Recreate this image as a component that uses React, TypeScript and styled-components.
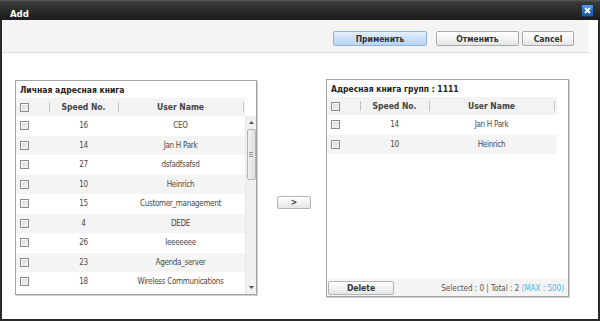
import React from "react";
import styled, { createGlobalStyle } from "styled-components";

const GlobalStyle = createGlobalStyle`
  html, body {
    margin: 0;
    padding: 0;
    background: #ffffff;
  }
  body {
    font-family: "DejaVu Sans Condensed", Tahoma, "DejaVu Sans", sans-serif;
    font-size: 8px;
    color: #4a4a4a;
  }
`;

const Window = styled.div`
  width: 600px;
  height: 321px;
  box-sizing: border-box;
  display: flex;
  flex-direction: column;
  background: #2a2a2a;
  padding: 0 2px 2px 2px;
`;

const TitleBar = styled.div`
  height: 20px;
  margin: 0 -2px;
  display: flex;
  align-items: center;
  justify-content: space-between;
  padding: 0 6px 0 10px;
  background: linear-gradient(#5a5a5a 0px, #3a3a3a 2px, #2c2c2c 10px, #1c1c1c 100%);
`;

const Title = styled.span`
  color: #fff;
  font-weight: bold;
  font-size: 9.5px;
  margin-top: 6px;
`;

const CloseButton = styled.button`
  width: 13px;
  height: 13px;
  padding: 0;
  border: 1px solid #12335f;
  border-radius: 1px;
  background: linear-gradient(#5c9be0, #2a69b8 55%, #1e58a2);
  display: flex;
  align-items: center;
  justify-content: center;
  margin-top: 1px;
`;

const Body = styled.div`
  flex: 1;
  background: #fff;
  display: flex;
  flex-direction: column;
`;

const Toolbar = styled.div`
  height: 33px;
  box-sizing: border-box;
  margin-right: 9px;
  background: #f4f4f4;
  border-bottom: 1px solid #dcdcdc;
  display: flex;
  justify-content: flex-end;
  align-items: flex-start;
  padding: 11px 15px 0 0;
  gap: 3px;
`;

const ActionButton = styled.button<{ $primary?: boolean; $w: number; $gap?: number }>`
  width: ${({ $w }) => $w}px;
  height: 15px;
  padding: 0;
  margin-right: ${({ $gap }) => $gap ?? 0}px;
  font-family: inherit;
  font-size: 8.5px;
  font-weight: bold;
  color: #333;
  border-radius: 2px;
  border: 1px solid ${({ $primary }) => ($primary ? "#8db4e0" : "#aaaaaa")};
  background: ${({ $primary }) =>
    $primary
      ? "linear-gradient(#e4f0fd, #c9e0f8 50%, #b9d6f5)"
      : "linear-gradient(#ffffff, #f4f4f4 50%, #e4e4e4)"};
`;

const Content = styled.div`
  flex: 1;
  display: flex;
  align-items: flex-start;
  padding: 26px 0 0 13px;
`;

const Panel = styled.div<{ $w: number; $h: number; $top: number }>`
  width: ${({ $w }) => $w}px;
  height: ${({ $h }) => $h}px;
  margin-top: ${({ $top }) => $top}px;
  box-sizing: border-box;
  border: 1px solid #a4a4a4;
  box-shadow: 1px 1px 0 #cfcfcf;
  display: flex;
  flex-direction: column;
  overflow: hidden;
  background: #fff;
`;

const PanelTitle = styled.div<{ $h: number }>`
  height: ${({ $h }) => $h}px;
  line-height: ${({ $h }) => $h + 1}px;
  padding-left: 4px;
  font-size: 8.5px;
  font-weight: bold;
  color: #222;
  white-space: nowrap;
`;

const PanelBody = styled.div`
  flex: 1;
  display: flex;
  min-height: 0;
`;

const Table = styled.div<{ $w: number }>`
  width: ${({ $w }) => $w}px;
  display: flex;
  flex-direction: column;
`;

const HeaderRow = styled.div`
  height: 18px;
  display: grid;
  grid-template-columns: 33px 69px 125px 1fr;
  align-items: center;
  background: #f3f3f3;
  font-size: 8.5px;
  font-weight: bold;
  color: #444;
`;

const HeaderCell = styled.div<{ $sep?: boolean }>`
  position: relative;
  text-align: center;
  height: 100%;
  line-height: 18px;
  &::before {
    content: "";
    display: ${({ $sep }) => ($sep ? "block" : "none")};
    position: absolute;
    left: 0;
    top: 4px;
    height: 10px;
    border-left: 1px solid #c4c4c4;
  }
`;

const Row = styled.div<{ $alt: boolean }>`
  height: 19.5px;
  display: grid;
  grid-template-columns: 33px 69px 125px 1fr;
  align-items: center;
  background: ${({ $alt }) => ($alt ? "#f4f4f4" : "#fff")};
  flex-shrink: 0;
`;

const Cell = styled.div`
  text-align: center;
  white-space: nowrap;
  letter-spacing: -0.3px;
`;

const CheckCell = styled.div`
  display: flex;
  align-items: center;
  padding-left: 4px;
`;

const CheckBox = styled.span`
  width: 9px;
  height: 9px;
  box-sizing: border-box;
  border: 1px solid #8c8c8c;
  background: linear-gradient(135deg, #d8d8d8, #f4f4f4);
  box-shadow: inset 1px 1px 0 #fff;
`;

const ScrollColumn = styled.div`
  width: 11px;
  display: flex;
  flex-direction: column;
`;

const ScrollSpacer = styled.div`
  height: 18px;
  flex-shrink: 0;
`;

const ScrollTrack = styled.div`
  flex: 1;
  background: #f0f0f0;
  display: flex;
  flex-direction: column;
  align-items: center;
  border-left: 1px solid #e8e8e8;
`;

const ScrollArrow = styled.div`
  height: 13px;
  width: 100%;
  display: flex;
  align-items: center;
  justify-content: center;
  flex-shrink: 0;
`;

const ScrollThumb = styled.div`
  width: 9px;
  height: 51px;
  box-sizing: border-box;
  border: 1px solid #b4b4b4;
  border-radius: 2px;
  background: linear-gradient(90deg, #f2f2f2, #dedede);
  display: flex;
  align-items: center;
  justify-content: center;
`;

const ScrollRest = styled.div`
  flex: 1;
`;

const Middle = styled.div`
  width: 69px;
  align-self: stretch;
  display: flex;
  align-items: center;
  padding: 6px 0 0 20px;
  box-sizing: border-box;
`;

const MoveButton = styled.button`
  width: 34px;
  height: 13px;
  padding: 0;
  font-family: inherit;
  font-size: 8.5px;
  font-weight: bold;
  color: #333;
  border: 1px solid #b4b4b4;
  border-radius: 2px;
  background: linear-gradient(#ffffff, #f2f2f2 50%, #e6e6e6);
  line-height: 11px;
`;

const Empty = styled.div`
  flex: 1;
`;

const Footer = styled.div`
  height: 17px;
  flex-shrink: 0;
  background: #f4f4f4;
  display: flex;
  align-items: center;
  justify-content: space-between;
  padding: 0 4px 0 1px;
  white-space: nowrap;
`;

const DeleteButton = styled(MoveButton)`
  width: 66px;
  height: 14px;
  margin-top: 1px;
`;

const Stats = styled.span`
  color: #555;
  margin-top: 1px;
`;

const Max = styled.span`
  color: #45b4ea;
`;

const leftRows: [number, string][] = [
  [16, "CEO"],
  [14, "Jan H Park"],
  [27, "dsfadfsafsd"],
  [10, "Heinrich"],
  [15, "Customer_management"],
  [4, "DEDE"],
  [26, "leeeeeee"],
  [23, "Agenda_server"],
  [18, "Wireless Communications"],
];

const rightRows: [number, string][] = [
  [14, "Jan H Park"],
  [10, "Heinrich"],
];

const Header = () => (
  <HeaderRow>
    <CheckCell>
      <CheckBox />
    </CheckCell>
    <HeaderCell $sep>Speed No.</HeaderCell>
    <HeaderCell $sep>User Name</HeaderCell>
    <HeaderCell $sep />
  </HeaderRow>
);

const Rows = ({ rows }: { rows: [number, string][] }) => (
  <>
    {rows.map(([no, name], i) => (
      <Row key={no + name} $alt={i % 2 === 1}>
        <CheckCell>
          <CheckBox />
        </CheckCell>
        <Cell>{no}</Cell>
        <Cell>{name}</Cell>
        <Cell />
      </Row>
    ))}
  </>
);

const Arrow = ({ up }: { up?: boolean }) => (
  <svg width="5" height="3" viewBox="0 0 5 3">
    <path d={up ? "M0 3 L2.5 0 L5 3Z" : "M0 0 L2.5 3 L5 0Z"} fill="#555" />
  </svg>
);

export default function App() {
  return (
    <>
      <GlobalStyle />
      <Window>
        <TitleBar>
          <Title>Add</Title>
          <CloseButton aria-label="close">
            <svg width="7" height="7" viewBox="0 0 7 7">
              <path d="M1 1 L6 6 M6 1 L1 6" stroke="#fff" strokeWidth="1.8" />
            </svg>
          </CloseButton>
        </TitleBar>
        <Body>
          <Toolbar>
            <ActionButton $primary $w={94} $gap={6}>
              Применить
            </ActionButton>
            <ActionButton $w={83}>Отменить</ActionButton>
            <ActionButton $w={52}>Cancel</ActionButton>
          </Toolbar>
          <Content>
            <Panel $w={242} $h={215} $top={1}>
              <PanelTitle $h={17}>Личная адресная книга</PanelTitle>
              <PanelBody>
                <Table $w={229}>
                  <Header />
                  <Rows rows={leftRows} />
                </Table>
                <ScrollColumn>
                  <ScrollSpacer />
                  <ScrollTrack>
                    <ScrollArrow>
                      <Arrow up />
                    </ScrollArrow>
                    <ScrollThumb>
                      <svg width="4" height="5" viewBox="0 0 4 5">
                        <path d="M0 0.5H4M0 2.5H4M0 4.5H4" stroke="#999" strokeWidth="1" />
                      </svg>
                    </ScrollThumb>
                    <ScrollRest />
                    <ScrollArrow>
                      <Arrow />
                    </ScrollArrow>
                  </ScrollTrack>
                </ScrollColumn>
              </PanelBody>
            </Panel>
            <Middle>
              <MoveButton>&gt;</MoveButton>
            </Middle>
            <Panel $w={243} $h={218} $top={0}>
              <PanelTitle $h={17}>Адресная книга групп : 1111</PanelTitle>
              <PanelBody>
                <Table $w={230}>
                  <Header />
                  <Rows rows={rightRows} />
                  <Empty />
                </Table>
              </PanelBody>
              <Footer>
                <DeleteButton>Delete</DeleteButton>
                <Stats>
                  Selected : 0 | Total : 2 <Max>(MAX : 500)</Max>
                </Stats>
              </Footer>
            </Panel>
          </Content>
        </Body>
      </Window>
    </>
  );
}
